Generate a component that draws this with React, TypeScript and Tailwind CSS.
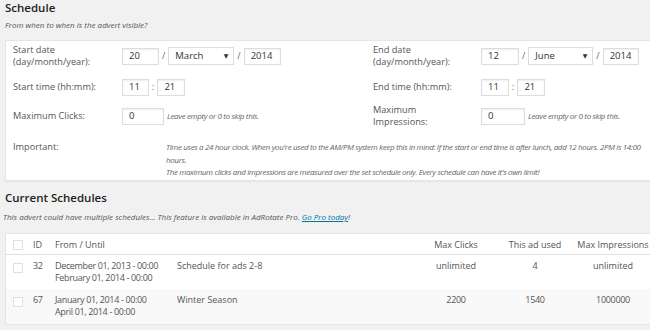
import React from "react";

const font = { fontFamily: '"Open Sans", "DejaVu Sans", sans-serif' };

function Input({ value, w }: { value: string; w: string }) {
  return (
    <div
      className={`${w} h-[17px] bg-white border border-[#dddddd] shadow-[inset_0_1px_2px_rgba(0,0,0,0.07)] flex items-center pl-[6px] text-[9.5px] text-[#333]`}
    >
      {value}
    </div>
  );
}

function Select({ value, w }: { value: string; w: string }) {
  return (
    <div
      className={`${w} h-[18px] bg-white border border-[#dddddd] flex items-center justify-between pl-[6px] pr-[5px] text-[9.5px] text-[#333]`}
    >
      <span>{value}</span>
      <span className="text-[6px] text-[#333]">▼</span>
    </div>
  );
}

function Slash({ c = "/" }: { c?: string }) {
  return <span className="text-[9px] text-[#666] px-[3px]">{c}</span>;
}

function Checkbox() {
  return <div className="w-[10px] h-[10px] border border-[#e0e0e0] bg-white" />;
}

const cols = "grid grid-cols-[23px_26px_122px_254px_50px_108px_48px]";

export default function App() {
  return (
    <div className="w-[650px] h-[330px] overflow-hidden bg-[#f1f1f1] text-[#555]" style={font}>
      <div className="pl-[5px]">
        <h3 className="text-[11.5px] font-semibold text-[#222] leading-[14px] pt-[1px]">Schedule</h3>
        <p className="italic text-[8px] text-[#555] mt-[4px] leading-[12px]">
          From when to when is the advert visible?
        </p>

        <div className="mt-[9px] w-[660px] bg-white border border-[#e5e5e5] shadow-[0_1px_1px_rgba(0,0,0,0.04)] pl-[7px] h-[141px]">
          <div className="grid grid-cols-[109px_251px_108px_1fr] text-[9.2px] leading-[12px] text-[#555]">
            {/* row 1 */}
            <div className="h-[30px] flex items-center">
              <div>
                Start date
                <br />
                (day/month/year):
              </div>
            </div>
            <div className="h-[30px] flex items-center">
              <Input value="20" w="w-[37px]" />
              <Slash />
              <Select value="March" w="w-[66px]" />
              <Slash />
              <Input value="2014" w="w-[37px]" />
            </div>
            <div className="h-[30px] flex items-center">
              <div>
                End date
                <br />
                (day/month/year):
              </div>
            </div>
            <div className="h-[30px] flex items-center">
              <Input value="12" w="w-[38px]" />
              <Slash />
              <Select value="June" w="w-[65px]" />
              <Slash />
              <Input value="2014" w="w-[36px]" />
            </div>

            {/* row 2 */}
            <div className="h-[32px] flex items-center">Start time (hh:mm):</div>
            <div className="h-[32px] flex items-center">
              <Input value="11" w="w-[27px]" />
              <Slash c=":" />
              <Input value="21" w="w-[28px]" />
            </div>
            <div className="h-[32px] flex items-center">End time (hh:mm):</div>
            <div className="h-[32px] flex items-center">
              <Input value="11" w="w-[28px]" />
              <Slash c=":" />
              <Input value="21" w="w-[28px]" />
            </div>

            {/* row 3 */}
            <div className="h-[26px] flex items-center">Maximum Clicks:</div>
            <div className="h-[26px] flex items-center">
              <Input value="0" w="w-[42px]" />
              <span className="italic text-[8px] tracking-[-0.35px] text-[#666] ml-[3px]">Leave empty or 0 to skip this.</span>
            </div>
            <div className="h-[26px] flex items-center">
              <div>
                Maximum
                <br />
                Impressions:
              </div>
            </div>
            <div className="h-[26px] flex items-center">
              <Input value="0" w="w-[44px]" />
              <span className="italic text-[8px] tracking-[-0.35px] text-[#666] ml-[3px]">Leave empty or 0 to skip this.</span>
            </div>

            {/* row 4 */}
            <div className="pt-[12px]">Important:</div>
            <div className="col-span-3 pt-[12px] italic text-[8px] tracking-[-0.35px] leading-[12.5px] text-[#666] pl-[44px] w-[536px]">
              Time uses a 24 hour clock. When you're used to the AM/PM system keep this in mind: If the start or end time is after lunch, add 12 hours. 2PM is 14:00 hours.
              <br />
              The maximum clicks and impressions are measured over the set schedule only. Every schedule can have it's own limit!
            </div>
          </div>
        </div>

        <h3 className="text-[11.5px] font-semibold text-[#222] leading-[14px] mt-[10px]">Current Schedules</h3>
        <p className="italic text-[8px] text-[#555] mt-[6px] leading-[12px] -ml-[2px]">
          This advert could have multiple schedules... This feature is available in AdRotate Pro.{" "}
          <span className="text-[#0074a2] underline">Go Pro today</span>!
        </p>

        <div className="mt-[10px] w-[660px] bg-white border border-[#e5e5e5] text-[9px] leading-[12px] text-[#555]">
          <div className={`${cols} h-[21px] items-center pt-[1px] border-b border-[#e1e1e1]`}>
            <div className="pl-[7px]"><Checkbox /></div>
            <div className="pl-[4px]">ID</div>
            <div>From / Until</div>
            <div></div>
            <div className="flex justify-center whitespace-nowrap">Max Clicks</div>
            <div className="flex justify-center whitespace-nowrap">This ad used</div>
            <div className="flex justify-center whitespace-nowrap">Max Impressions</div>
          </div>
          <div className={`${cols} h-[34px] pt-[5px] text-[9px]`}>
            <div className="pl-[7px] pt-[3px]"><Checkbox /></div>
            <div className="pl-[4px] tracking-[-0.3px]">32</div>
            <div className="whitespace-nowrap tracking-[-0.35px]">
              December 01, 2013 - 00:00
              <br />
              February 01, 2014 - 00:00
            </div>
            <div>Schedule for ads 2-8</div>
            <div className="flex justify-center">unlimited</div>
            <div className="flex justify-center">4</div>
            <div className="flex justify-center">unlimited</div>
          </div>
          <div className={`${cols} h-[35px] pt-[5px] bg-[#f9f9f9] text-[9px]`}>
            <div className="pl-[7px] pt-[3px]"><Checkbox /></div>
            <div className="pl-[4px] tracking-[-0.3px]">67</div>
            <div className="whitespace-nowrap tracking-[-0.35px]">
              January 01, 2014 - 00:00
              <br />
              April 01, 2014 - 00:00
            </div>
            <div>Winter Season</div>
            <div className="flex justify-center tracking-[-0.3px]">2200</div>
            <div className="flex justify-center tracking-[-0.3px]">1540</div>
            <div className="flex justify-center tracking-[-0.3px]">1000000</div>
          </div>
        </div>
      </div>
    </div>
  );
}
